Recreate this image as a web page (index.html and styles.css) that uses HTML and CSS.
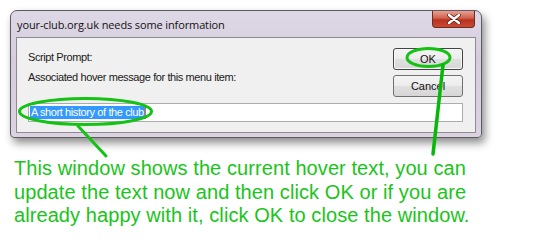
FILE: index.html
```html
<!DOCTYPE html>
<html>
<head>
<meta charset="utf-8">
<link rel="stylesheet" href="styles.css">
</head>
<body>
<div class="page">
  <div class="window">
    <div class="titlebar">
      <span class="title">your-club.org.uk needs some information</span>
      <span class="close"><svg width="14" height="10" viewBox="0 0 14 10"><path d="M2 1 L12 9 M12 1 L2 9" stroke="#5a1a14" stroke-width="3.8" stroke-linecap="round"/><path d="M2 1 L12 9 M12 1 L2 9" stroke="#ffffff" stroke-width="2.4" stroke-linecap="round"/></svg></span>
    </div>
    <div class="client">
      <div class="top">
        <div class="labels">
          <div class="label">Script Prompt:</div>
          <div class="label">Associated hover message for this menu item:</div>
        </div>
        <div class="buttons">
          <div class="btn btn-default">OK</div>
          <div class="btn">Cancel</div>
        </div>
      </div>
      <div class="input"><span class="sel">A short history of the club</span><span class="caret"></span></div>
    </div>
  </div>
  <p class="note">This window shows the current hover text, you can update the text now and then click OK or if you are already happy with it, click OK to close the window.</p>
  <svg class="annot" width="536" height="243" viewBox="0 0 536 243">
    <ellipse cx="85.5" cy="111.5" rx="66" ry="13" fill="none" stroke="#14c214" stroke-width="3"/>
    <line x1="78" y1="126" x2="106" y2="156" stroke="#14c214" stroke-width="3" stroke-linecap="round"/>
    <ellipse cx="428.5" cy="57.5" rx="21.5" ry="9" fill="none" stroke="#14c214" stroke-width="3"/>
    <line x1="443" y1="65" x2="433" y2="154" stroke="#08b808" stroke-width="3.5" stroke-linecap="round"/>
  </svg>
</div>
</body>
</html>
```
FILE: styles.css
```css
html, body {
  margin: 0;
  padding: 0;
  background: #ffffff;
}
.page {
  position: relative;
  width: 536px;
  height: 243px;
  overflow: hidden;
  padding-top: 10px;
  box-sizing: border-box;
}
.window {
  margin-left: 10px;
  width: 472px;
  height: 128px;
  box-sizing: border-box;
  border: 1px solid #5e5a62;
  border-radius: 7px 7px 4px 4px;
  background: linear-gradient(#ded8e6, #d6cddc 40%, #dcd3e0);
  box-shadow: 3px 5px 9px rgba(0,0,0,0.45);
  display: flex;
  flex-direction: column;
}
.titlebar {
  height: 26px;
  display: flex;
  align-items: flex-start;
  justify-content: space-between;
  padding-left: 6px;
  padding-right: 6px;
}
.title {
  font-family: "Open Sans", "DejaVu Sans", sans-serif;
  font-size: 11px;
  color: #111;
  margin-top: 6px;
  letter-spacing: -0.12px;
}
.close {
  width: 43px;
  height: 17px;
  box-sizing: border-box;
  border: 1px solid #6b2a22;
  border-top: none;
  border-radius: 0 0 4px 4px;
  background: linear-gradient(#e9a091, #d0604c 45%, #b8321f 55%, #c94a33);
  display: flex;
  align-items: center;
  justify-content: center;
}
.client {
  flex: 1;
  margin: 0 5px 4px 5px;
  background: #f0f0f0;
  border: 1px solid #8f8a94;
  padding: 10px 12px 0 11px;
}
.top {
  display: flex;
  justify-content: space-between;
}
.label {
  font-family: "Liberation Sans", Arial, sans-serif;
  font-size: 11px;
  color: #1a1a1a;
  height: 20px;
  line-height: 14px;
  letter-spacing: -0.4px;
}
.label:first-child {
  margin-top: 2px;
}
.buttons {
  display: flex;
  flex-direction: column;
  gap: 5px;
}
.btn {
  width: 70px;
  height: 22px;
  box-sizing: border-box;
  border: 1px solid #707070;
  border-radius: 3px;
  background: linear-gradient(#f4f4f4, #ececec 50%, #e0e0e0 50%, #d6d6d6);
  font-family: "Liberation Sans", Arial, sans-serif;
  font-size: 11px;
  color: #111;
  display: flex;
  align-items: center;
  justify-content: center;
}
.btn-default {
  border-color: #444;
  box-shadow: inset 0 0 0 1px #f8f8f8;
}
.input {
  margin-top: 6px;
  height: 19px;
  box-sizing: border-box;
  border: 1px solid #abadb3;
  background: #ffffff;
  display: flex;
  align-items: center;
  padding-left: 1px;
}
.sel {
  background: #3399ff;
  color: #ffffff;
  font-family: "Liberation Sans", Arial, sans-serif;
  font-size: 11px;
  line-height: 13px;
  letter-spacing: -0.4px;
  padding: 0 1px;
}
.caret {
  width: 1px;
  height: 13px;
  background: #e07020;
}
.note {
  margin: 19px 0 0 14px;
  width: 470px;
  font-family: "Liberation Sans", Arial, sans-serif;
  font-size: 20px;
  line-height: 23.5px;
  letter-spacing: 0.08px;
  color: #1ac41a;
}
.annot {
  position: absolute;
  left: 0;
  top: 0;
  pointer-events: none;
}
```
